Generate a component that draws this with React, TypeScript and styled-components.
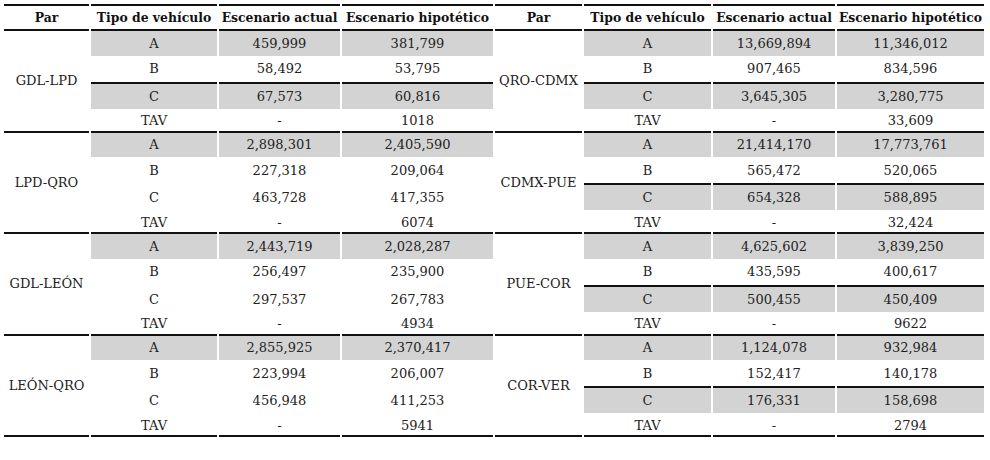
import styled, { createGlobalStyle } from "styled-components";

type Row = [string, string, string];
type Group = { pair: string; rows: Row[]; ruleC: boolean };

const left: Group[] = [
  {
    pair: "GDL-LPD",
    ruleC: true,
    rows: [
      ["A", "459,999", "381,799"],
      ["B", "58,492", "53,795"],
      ["C", "67,573", "60,816"],
      ["TAV", "-", "1018"],
    ],
  },
  {
    pair: "LPD-QRO",
    ruleC: false,
    rows: [
      ["A", "2,898,301", "2,405,590"],
      ["B", "227,318", "209,064"],
      ["C", "463,728", "417,355"],
      ["TAV", "-", "6074"],
    ],
  },
  {
    pair: "GDL-LEÓN",
    ruleC: false,
    rows: [
      ["A", "2,443,719", "2,028,287"],
      ["B", "256,497", "235,900"],
      ["C", "297,537", "267,783"],
      ["TAV", "-", "4934"],
    ],
  },
  {
    pair: "LEÓN-QRO",
    ruleC: false,
    rows: [
      ["A", "2,855,925", "2,370,417"],
      ["B", "223,994", "206,007"],
      ["C", "456,948", "411,253"],
      ["TAV", "-", "5941"],
    ],
  },
];

const right: Group[] = [
  {
    pair: "QRO-CDMX",
    ruleC: true,
    rows: [
      ["A", "13,669,894", "11,346,012"],
      ["B", "907,465", "834,596"],
      ["C", "3,645,305", "3,280,775"],
      ["TAV", "-", "33,609"],
    ],
  },
  {
    pair: "CDMX-PUE",
    ruleC: true,
    rows: [
      ["A", "21,414,170", "17,773,761"],
      ["B", "565,472", "520,065"],
      ["C", "654,328", "588,895"],
      ["TAV", "-", "32,424"],
    ],
  },
  {
    pair: "PUE-COR",
    ruleC: true,
    rows: [
      ["A", "4,625,602", "3,839,250"],
      ["B", "435,595", "400,617"],
      ["C", "500,455", "450,409"],
      ["TAV", "-", "9622"],
    ],
  },
  {
    pair: "COR-VER",
    ruleC: true,
    rows: [
      ["A", "1,124,078", "932,984"],
      ["B", "152,417", "140,178"],
      ["C", "176,331", "158,698"],
      ["TAV", "-", "2794"],
    ],
  },
];

const headers = ["Par", "Tipo de vehículo", "Escenario actual", "Escenario hipotético"];
const widths = [85, 126, 121, 151, 87, 127, 122, 147];
// altura de cada fila del grupo: A, B, C (con línea), TAV (con línea)
const rowHeights = [24.5, 26, 27, 24];

const GlobalStyle = createGlobalStyle`
  body {
    margin: 0;
    background: #fff;
  }
`;

const Page = styled.main`
  padding: 4px 0 0 2px;
`;

const Table = styled.table`
  border-collapse: separate;
  border-spacing: 2px 0;
  table-layout: fixed;
  color: #222;
  font-family: "DejaVu Serif", "Liberation Serif", serif;
  font-size: 13px;
`;

const HeadCell = styled.th`
  box-sizing: border-box;
  height: 27px;
  padding: 0;
  border-top: 2px solid #111;
  border-bottom: 2px solid #111;
  color: #111;
  font-size: 12.4px;
  font-weight: bold;
  white-space: nowrap;
  text-align: center;
  vertical-align: middle;
`;

const PairCell = styled.td`
  box-sizing: border-box;
  padding: 0;
  border-bottom: 2px solid #111;
  text-align: center;
  vertical-align: middle;
  white-space: nowrap;
`;

const Cell = styled.td<{ $shade: boolean; $rule: "line" | "blank" | "none"; $bottom: boolean; $h: number }>`
  box-sizing: border-box;
  height: ${({ $h }) => $h}px;
  padding: ${({ $bottom }) => ($bottom ? "2px 0 0" : "0")};
  background: ${({ $shade }) => ($shade ? "#d3d3d3" : "transparent")};
  border-top: ${({ $rule }) =>
    $rule === "line" ? "2px solid #111" : $rule === "blank" ? "2px solid transparent" : "none"};
  border-bottom: ${({ $bottom }) => ($bottom ? "2px solid #111" : "none")};
  text-align: center;
  vertical-align: middle;
  white-space: nowrap;
`;

const GroupCells = ({ group, index }: { group: Group; index: number }) => {
  const row = group.rows[index];
  const isC = index === 2;
  const shade = index === 0 || (isC && group.ruleC);
  const rule = !isC ? "none" : group.ruleC ? "line" : "blank";
  return (
    <>
      {index === 0 && <PairCell rowSpan={4}>{group.pair}</PairCell>}
      {row.map((value, i) => (
        <Cell key={i} $h={rowHeights[index]} $shade={shade} $rule={rule} $bottom={index === 3}>
          {value}
        </Cell>
      ))}
    </>
  );
};

const App = () => (
  <>
    <GlobalStyle />
    <Page>
      <Table>
        <colgroup>
          {widths.map((w, i) => (
            <col key={i} style={{ width: w }} />
          ))}
        </colgroup>
        <thead>
          <tr>
            {[...headers, ...headers].map((h, i) => (
              <HeadCell key={i}>{h}</HeadCell>
            ))}
          </tr>
        </thead>
        <tbody>
          {left.map((g, gi) =>
            g.rows.map((_, ri) => (
              <tr key={`${gi}-${ri}`}>
                <GroupCells group={g} index={ri} />
                <GroupCells group={right[gi]} index={ri} />
              </tr>
            ))
          )}
        </tbody>
      </Table>
    </Page>
  </>
);

export default App;
